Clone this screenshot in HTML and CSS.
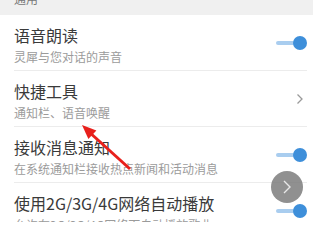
FILE: index.html
```html
<!DOCTYPE html>
<html>
<head>
<meta charset="utf-8">
<link rel="stylesheet" href="styles.css">
</head>
<body>
<div class="screen">
  <div class="section-head"><span class="section-title">通用</span></div>
  <div class="row">
    <div class="texts">
      <div class="title">语音朗读</div>
      <div class="sub">灵犀与您对话的声音</div>
    </div>
    <div class="toggle"><span class="track"></span><span class="thumb"></span></div>
  </div>
  <div class="row">
    <div class="texts">
      <div class="title">快捷工具</div>
      <div class="sub">通知栏、语音唤醒</div>
    </div>
    <svg class="chev" width="8" height="12" viewBox="0 0 8 12"><path d="M1.5 1.5 L6 6 L1.5 10.5" fill="none" stroke="#9a9a9a" stroke-width="1.3"/></svg>
  </div>
  <div class="row">
    <div class="texts">
      <div class="title">接收消息通知</div>
      <div class="sub">在系统通知栏接收热点新闻和活动消息</div>
    </div>
    <div class="toggle"><span class="track"></span><span class="thumb"></span></div>
  </div>
  <div class="row last">
    <div class="texts">
      <div class="title">使用2G/3G/4G网络自动播放</div>
      <div class="sub">允许在2G/3G/4G网络下自动播放歌曲</div>
    </div>
    <div class="toggle"><span class="track"></span><span class="thumb"></span></div>
  </div>
  <div class="fab">
    <svg width="12" height="16" viewBox="0 0 12 16"><path d="M3 2 L9 8 L3 14" fill="none" stroke="#e8e8e8" stroke-width="1.4"/></svg>
  </div>
  <svg class="arrow" width="56" height="52" viewBox="0 0 56 52">
    <line x1="52" y1="48" x2="10" y2="10" stroke="#e8201c" stroke-width="3"/>
    <polygon points="4,4 18.4,9.4 10.4,18" fill="#e8201c"/>
  </svg>
</div>
</body>
</html>
```
FILE: styles.css
```css
html, body { margin: 0; padding: 0; background: #fff; }
body { font-family: "Noto Sans CJK SC", "Noto Sans", sans-serif; }
.screen {
  position: relative;
  width: 313px;
  height: 222px;
  overflow: hidden;
  background: #fff;
}
.section-head {
  height: 15px;
  background: #f0f0f0;
  overflow: hidden;
  padding-left: 14px;
}
.section-title {
  display: block;
  font-size: 12px;
  line-height: 12px;
  color: #777;
  margin-top: -7px;
}
.row {
  display: flex;
  align-items: center;
  height: 56px;
  box-sizing: border-box;
  margin-left: 14px;
  margin-right: 6px;
  border-bottom: 1px solid #ececec;
}
.row.last { border-bottom: none; }
.texts { flex: 1; padding-top: 4px; }
.title {
  font-size: 16px;
  line-height: 20px;
  color: #3a3a3a;
  white-space: nowrap;
}
.sub {
  font-size: 12px;
  line-height: 16px;
  margin-top: 4px;
  color: #9b9b9b;
  white-space: nowrap;
}
.toggle {
  position: relative;
  width: 31px;
  height: 14px;
  flex: none;
}
.track {
  position: absolute;
  left: 0;
  top: 5px;
  width: 26px;
  height: 4px;
  border-radius: 2px;
  background: #a9cdef;
}
.thumb {
  position: absolute;
  right: 0;
  top: 0;
  width: 14px;
  height: 14px;
  border-radius: 50%;
  background: #3e8fda;
}
.chev { flex: none; margin-right: 3px; }
.fab {
  position: absolute;
  left: 271px;
  top: 171px;
  width: 32px;
  height: 32px;
  border-radius: 50%;
  background: rgba(125,125,125,0.85);
  display: flex;
  align-items: center;
  justify-content: center;
}
.arrow {
  position: absolute;
  left: 78px;
  top: 121px;
}
```
